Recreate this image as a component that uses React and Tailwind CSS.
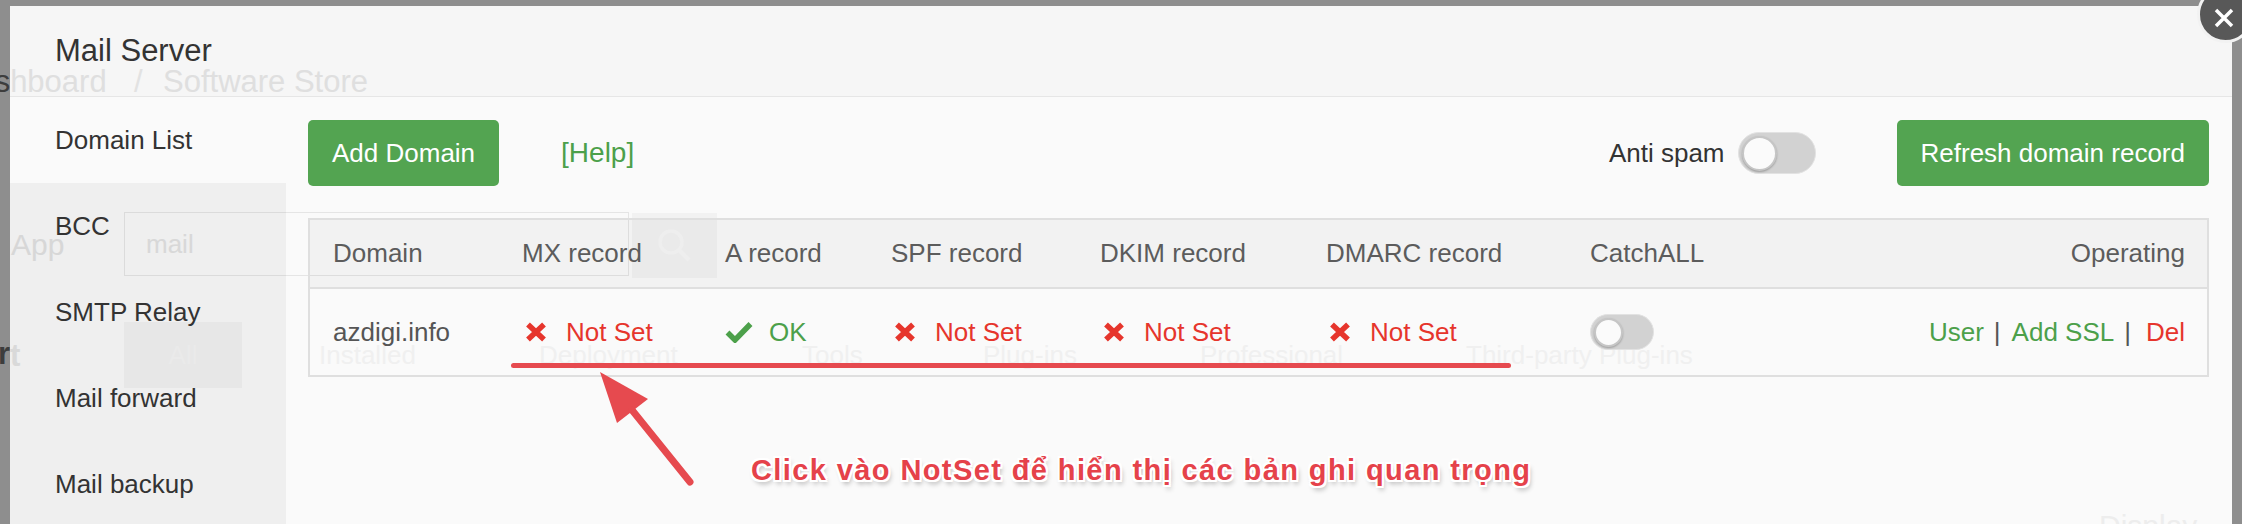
import React from "react";

const menu = ["Domain List", "BCC", "SMTP Relay", "Mail forward", "Mail backup"];
const heads = ["Domain", "MX record", "A record", "SPF record", "DKIM record", "DMARC record", "CatchALL"];

const XIcon = () => (
  <svg width="22" height="20" viewBox="0 0 22 20" className="ml-[3px] shrink-0">
    <path d="M3 2.5L19 17.5M19 2.5L3 17.5" stroke="#e6352c" strokeWidth="5.5" />
  </svg>
);

const CheckIcon = () => (
  <svg width="28" height="22" viewBox="0 0 28 22" className="shrink-0">
    <path d="M2.5 11.5L10 19L25.5 3" fill="none" stroke="#4ca04a" strokeWidth="5.5" />
  </svg>
);

const NotSet = () => (
  <div className="flex items-center gap-[19px] pl-[23px]">
    <XIcon />
    <span className="text-[#e6352c]">Not Set</span>
  </div>
);

const BigToggle = () => (
  <div className="flex h-[42px] w-[78px] items-center rounded-full border border-[#e2e2e2] bg-[#d2d2d2] p-[3px]">
    <div className="h-[35px] w-[35px] rounded-full border-2 border-[#c6c6c6] bg-[#fbfbfb] shadow-[0_1px_2px_rgba(0,0,0,0.25)]" />
  </div>
);

const SmallToggle = () => (
  <div className="flex h-[36px] w-[64px] items-center rounded-full border border-[#e2e2e2] bg-[#d2d2d2] p-[3px]">
    <div className="h-[29px] w-[29px] rounded-full border-2 border-[#c6c6c6] bg-[#fbfbfb] shadow-[0_1px_2px_rgba(0,0,0,0.25)]" />
  </div>
);

// faded page that shows through the modal
const Ghost = () => (
  <div className="pointer-events-none absolute inset-0 overflow-hidden">
    <div className="absolute left-[-55px] top-[60px] text-[31px] leading-none text-[#e3e3e3]">Dashboard</div>
    <div className="absolute left-[124px] top-[60px] text-[31px] leading-none text-[#e6e6e6]">/</div>
    <div className="absolute left-[153px] top-[60px] text-[31px] leading-none text-[#e3e3e3]">Software Store</div>
    <div className="absolute left-[1px] top-[224px] text-[30px] leading-none text-[#e1e1e1]">App</div>
    <div className="absolute left-[114px] top-[206px] flex h-[64px] w-[505px] items-center border border-[#e5e5e5] pl-[21px] text-[26px] text-[#e2e2e2]">mail</div>
    <div className="absolute left-[622px] top-[207px] flex h-[65px] w-[85px] items-center justify-center bg-black/[0.03]">
      <svg width="38" height="36" viewBox="0 0 38 36">
        <circle cx="15" cy="14" r="11" fill="none" stroke="#f6f6f6" strokeWidth="3.5" />
        <path d="M23 22L33 32" stroke="#f6f6f6" strokeWidth="4" />
      </svg>
    </div>
    <div className="absolute left-[-31px] top-[334px] text-[31px] font-bold leading-none text-[#e3e3e3]">ort</div>
    <div className="absolute left-[114px] top-[316px] flex h-[66px] w-[118px] items-center justify-center bg-black/[0.03] text-[26px] text-[#f5f5f5]">All</div>
    <div className="absolute left-[309px] top-[336px] text-[26px] leading-none text-[#f0f0f0]">Installed</div>
    <div className="absolute left-[529px] top-[336px] text-[26px] leading-none text-[#f0f0f0]">Deployment</div>
    <div className="absolute left-[792px] top-[336px] text-[26px] leading-none text-[#f0f0f0]">Tools</div>
    <div className="absolute left-[973px] top-[336px] text-[26px] leading-none text-[#f0f0f0]">Plug-ins</div>
    <div className="absolute left-[1190px] top-[336px] text-[26px] leading-none text-[#f0f0f0]">Professional</div>
    <div className="absolute left-[1456px] top-[336px] text-[26px] leading-none text-[#f0f0f0]">Third-party Plug-ins</div>
    <div className="absolute left-[2089px] top-[505px] text-[30px] leading-none text-[#ededed]">Display as</div>
  </div>
);

export default function App() {
  return (
    <div className="relative h-[524px] w-[2242px] overflow-hidden bg-[#8e8e8e] px-[10px] pt-[6px] font-['Liberation_Sans',Arial,sans-serif]">
      <div className="absolute left-[-45px] top-[66px] text-[31px] leading-none text-[#3d3d3d]">Dashboard</div>
      <div className="absolute left-[-21px] top-[338px] text-[31px] font-bold leading-none text-[#3d3d3d]">ort</div>

      <div className="relative h-[600px] overflow-hidden bg-[#fafafa]">
        <Ghost />
        <div className="relative flex flex-col">
          {/* header */}
          <div className="flex h-[91px] items-center border-b border-[#e6e6e6] bg-black/[0.016] pl-[45px] text-[31px] text-[#333]">
            Mail Server
          </div>

          <div className="flex">
            {/* sidebar */}
            <div className="h-[520px] w-[276px] shrink-0 bg-black/[0.044]">
              {menu.map((m, i) => (
                <div
                  key={m}
                  className={`flex h-[86px] items-center pl-[45px] text-[26px] text-[#333] ${i === 0 ? "bg-[#fafafa]" : ""}`}
                >
                  {m}
                </div>
              ))}
            </div>

            {/* content */}
            <div className="flex-1 pl-[22px] pr-[23px] pt-[23px]">
              <div className="flex h-[66px] items-center">
                <div className="flex h-[66px] items-center rounded-[5px] bg-[#53a451] px-[24px] text-[26px] text-white">Add Domain</div>
                <span className="ml-[62px] text-[28px] text-[#4ca04a]">[Help]</span>
                <div className="ml-auto flex items-center">
                  <span className="text-[26px] text-[#333]">Anti spam</span>
                  <div className="ml-[13px]">
                    <BigToggle />
                  </div>
                  <div className="ml-[81px] flex h-[66px] items-center rounded-[5px] bg-[#53a451] px-[24px] text-[26px] text-white">
                    Refresh domain record
                  </div>
                </div>
              </div>

              {/* table */}
              <div className="mt-[32px] border-2 border-[#dfdfdf] text-[26px]">
                <div className="grid h-[69px] grid-cols-[189px_203px_166px_209px_226px_264px_200px_1fr] items-center border-b-2 border-[#dfdfdf] bg-black/[0.03] text-[#5c5c5c]">
                  {heads.map((h) => (
                    <div key={h} className="pl-[23px]">{h}</div>
                  ))}
                  <div className="pr-[22px] text-right">Operating</div>
                </div>
                <div className="grid h-[86px] grid-cols-[189px_203px_166px_209px_226px_264px_200px_1fr] items-center text-[#555]">
                  <div className="pl-[23px]">azdigi.info</div>
                  <NotSet />
                  <div className="flex items-center gap-[16px] pl-[23px]">
                    <CheckIcon />
                    <span className="text-[#4ca04a]">OK</span>
                  </div>
                  <NotSet />
                  <NotSet />
                  <NotSet />
                  <div className="pl-[23px]">
                    <SmallToggle />
                  </div>
                  <div className="flex items-center justify-end pr-[22px]">
                    <span className="text-[#4ca04a]">User</span>
                    <span className="ml-[10px] text-[#555]">|</span>
                    <span className="ml-[11px] text-[#4ca04a]">Add SSL</span>
                    <span className="ml-[10px] text-[#555]">|</span>
                    <span className="ml-[15px] text-[#e6352c]">Del</span>
                  </div>
                </div>
              </div>
            </div>
          </div>
        </div>
      </div>

      {/* close button */}
      <div className="absolute left-[2197px] top-[-14px] flex h-[57px] w-[57px] items-center justify-center rounded-full border-[3px] border-[#f2f2f2] bg-[#585858]">
        <svg width="22" height="22" viewBox="0 0 22 22" className="mt-[6px] mr-[4px]">
          <path d="M3 3L19 19M19 3L3 19" stroke="#fff" strokeWidth="3.5" />
        </svg>
      </div>

      {/* annotation */}
      <div className="absolute left-[511px] top-[363px] h-[5px] w-[1000px] rounded-full bg-[#e64a4f]" />
      <svg className="absolute left-[590px] top-[362px]" width="110" height="130" viewBox="0 0 110 130">
        <path d="M10 10L58 37L27 61Z" fill="#e64a4f" />
        <path d="M42 48L100 120" stroke="#e64a4f" strokeWidth="7" strokeLinecap="round" />
      </svg>
      <div className="absolute left-[751px] top-[456px] whitespace-nowrap text-[29px] font-bold leading-none tracking-[1.4px] text-[#e5424a] [text-shadow:2px_0_0_#fff,-2px_0_0_#fff,0_2px_0_#fff,0_-2px_0_#fff,2px_2px_0_#fff,-2px_-2px_0_#fff,2px_-2px_0_#fff,-2px_2px_0_#fff,2px_4px_5px_rgba(0,0,0,0.3)]">
        Click vào NotSet để hiển thị các bản ghi quan trọng
      </div>
    </div>
  );
}
